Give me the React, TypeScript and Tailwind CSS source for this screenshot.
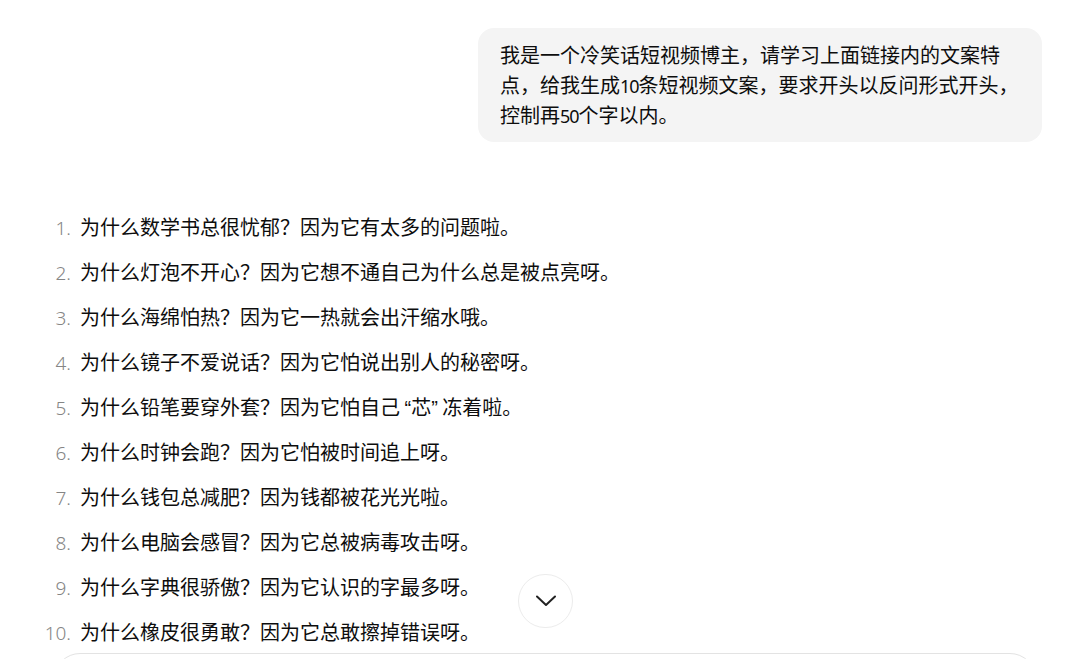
import React from "react";

const Q = ({ c }: { c: string }) => <span className="font-['Liberation_Sans',sans-serif]">{c}</span>;
const D = ({ c }: { c: string }) => <span className="font-['Noto_Sans',sans-serif] text-[18px] leading-none tracking-[-1px]">{c}</span>;

const items: React.ReactNode[] = [
  "为什么数学书总很忧郁？因为它有太多的问题啦。",
  "为什么灯泡不开心？因为它想不通自己为什么总是被点亮呀。",
  "为什么海绵怕热？因为它一热就会出汗缩水哦。",
  "为什么镜子不爱说话？因为它怕说出别人的秘密呀。",
  <>为什么铅笔要穿外套？因为它怕自己 <Q c="“" />芯<Q c="”" /> 冻着啦。</>,
  "为什么时钟会跑？因为它怕被时间追上呀。",
  "为什么钱包总减肥？因为钱都被花光光啦。",
  "为什么电脑会感冒？因为它总被病毒攻击呀。",
  "为什么字典很骄傲？因为它认识的字最多呀。",
  "为什么橡皮很勇敢？因为它总敢擦掉错误呀。",
];

export default function App() {
  return (
    <div className="relative h-[659px] w-full overflow-hidden bg-white font-['Noto_Sans_CJK_SC','Noto_Sans',sans-serif] text-[#0d0d0d]">
      <div className="flex flex-col pt-[28px] pl-[40px] pr-[34px]">
        <div className="flex justify-end">
          <div className="w-[564px] rounded-[16px] bg-[#f4f4f4] py-[12px] pl-[22px] pr-[23px] text-[20px] leading-[30px]">
            我是一个冷笑话短视频博主，请学习上面链接内的文案特点，给我生成<D c="10" />条短视频文案，要求开头以反问形式开头，控制再<D c="50" />个字以内。
          </div>
        </div>
        <ol className="mt-[70px] flex flex-col gap-[15px]">
          {items.map((t, i) => (
            <li key={i} className="flex h-[30px] items-baseline text-[20px] leading-[30px]">
              <span className="w-[31px] shrink-0 text-right text-[19px] font-light text-[#858585] font-['Noto_Sans',sans-serif]">
                {i + 1}.
              </span>
              <span className="ml-[9px]">{t}</span>
            </li>
          ))}
        </ol>
        <div className="ml-[14px] mt-[6px] h-[60px] w-[982px] rounded-[26px] border border-[#e3e3e3] bg-white" />
      </div>
      <button className="absolute left-[518px] top-[574px] flex h-[54px] w-[55px] items-center justify-center rounded-full border border-[#ececec] bg-white">
        <svg width="20" height="12" viewBox="0 0 20 12" fill="none">
          <polyline points="1,1.5 10,10 19,1.5" stroke="#222" strokeWidth="2" strokeLinecap="round" strokeLinejoin="round" />
        </svg>
      </button>
    </div>
  );
}
